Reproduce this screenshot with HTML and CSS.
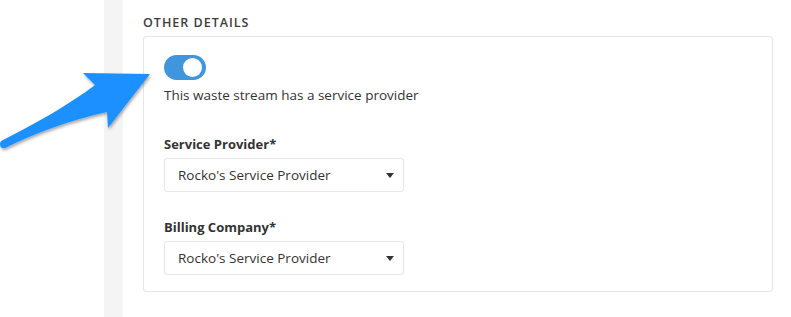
FILE: index.html
```html
<!doctype html>
<html>
  <head>
    <title>Other Details</title>
    <link rel="stylesheet" href="styles.css">
  </head>
  <body>
    <div class="page">
      <div class="gutter"></div>
      <div class="strip"></div>
      <div class="main">
        <h3 class="section-title">Other Details</h3>
        <div class="card">
          <label class="toggle">
            <input type="checkbox" checked />
            <span class="track"><span class="knob"></span></span>
          </label>
          <p class="toggle-text">This waste stream has a service provider</p>

          <div class="field">
            <div class="field-label">Service Provider*</div>
            <div class="select">
              <span>Rocko's Service Provider</span>
              <span class="caret"></span>
            </div>
          </div>

          <div class="field">
            <div class="field-label">Billing Company*</div>
            <div class="select">
              <span>Rocko's Service Provider</span>
              <span class="caret"></span>
            </div>
          </div>
        </div>
      </div>
    </div>

    <svg class="pointer" width="160" height="160" viewBox="0 0 160 160">
      <defs>
        <filter id="shadow" x="-20%" y="-20%" width="140%" height="140%">
          <feDropShadow dx="1" dy="2" stdDeviation="1.5" flood-color="#000" flood-opacity="0.35" />
        </filter>
      </defs>
      <path filter="url(#shadow)" fill="#1e90ff"
        d="M83,73 L150,74 L108,128 L107,112 C70,120 35,133 5,148 Q0,149 0,144 Q0,141 3,140 C35,124 70,104 95,85 Z" />
    </svg>
  </body>
</html>
```

FILE: styles.css
```css
body {
  margin: 0;
  font-family: "Open Sans", Lato, sans-serif;
  color: #333;
  background: #fff;
}

.page {
  display: flex;
  height: 317px;
}

.gutter {
  width: 104px;
}

.strip {
  width: 19px;
  background: #f4f4f4;
}

.main {
  flex: 1;
  padding: 0 18px 0 20px;
}

.section-title {
  margin: 14px 0 5px;
  font-size: 12.5px;
  font-weight: 600;
  line-height: 17px;
  letter-spacing: 1px;
  text-transform: uppercase;
  color: #3c3c3c;
}

.card {
  border: 1px solid #e6e6e6;
  border-radius: 3px;
  padding: 18px 20px 16px;
}

.toggle {
  display: flex;
}

.toggle input {
  display: none;
}

.track {
  display: block;
  width: 42px;
  height: 25px;
  border-radius: 13px;
  background: #3f96dc;
  position: relative;
}

.knob {
  position: absolute;
  top: 3px;
  right: 4px;
  width: 19px;
  height: 19px;
  border-radius: 50%;
  background: #fff;
}

.toggle-text {
  margin: 5px 0 0;
  font-size: 13.5px;
  line-height: 20px;
}

.field {
  margin-top: 29px;
}

.field + .field {
  margin-top: 25px;
}

.field-label {
  font-size: 13px;
  font-weight: 700;
  line-height: 20px;
  margin-bottom: 4px;
}

.select {
  display: flex;
  align-items: center;
  justify-content: space-between;
  box-sizing: border-box;
  width: 240px;
  height: 34px;
  padding: 0 9px 0 13px;
  border: 1px solid #e6e6e6;
  border-radius: 3px;
  font-size: 13.5px;
}

.caret {
  width: 0;
  height: 0;
  border-left: 4px solid transparent;
  border-right: 4px solid transparent;
  border-top: 5px solid #333;
}

.pointer {
  position: absolute;
  left: 0;
  top: 0;
}
```
